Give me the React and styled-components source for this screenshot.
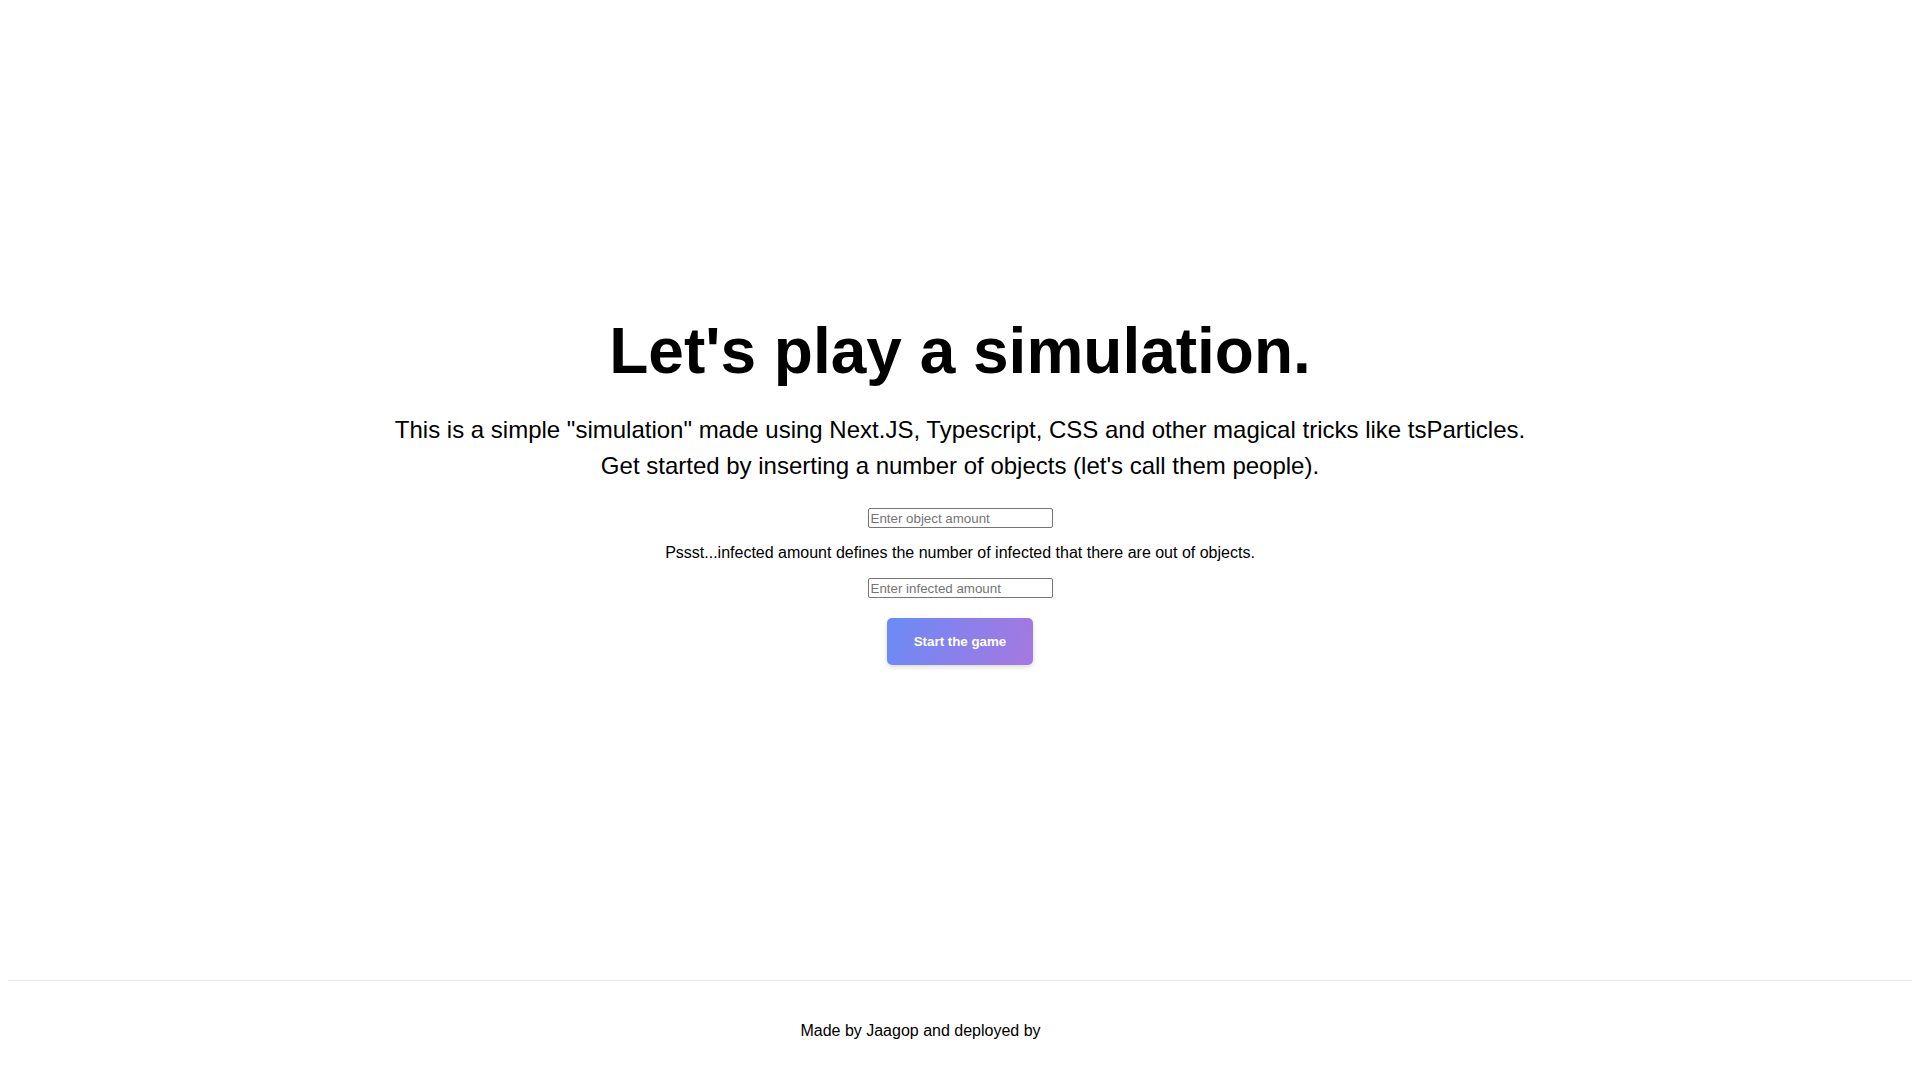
import React from 'react';
import styled, { createGlobalStyle } from 'styled-components';

const GlobalStyle = createGlobalStyle`
  html,
  body {
    padding: 0;
    margin: 0;
    font-family: "Liberation Sans", Arial, sans-serif;
    color: #000;
    background: #fff;
  }

  * {
    box-sizing: border-box;
  }
`;

const App = () => {
  return (
    <>
      <GlobalStyle />
      <Container>
        <Main>
          <Title>Let's play a simulation.</Title>

          <Description>
            This is a simple "simulation" made using Next.JS, Typescript, CSS and other magical tricks like tsParticles.
            <br />
            Get started by inserting a number of objects (let's call them people).
          </Description>

          <AmountInput type="number" placeholder="Enter object amount" />
          <Hint>Pssst...infected amount defines the number of infected that there are out of objects.</Hint>
          <AmountInput type="number" placeholder="Enter infected amount" />

          <StartButton type="button">Start the game</StartButton>
        </Main>

        <Footer>
          <FooterLink href="#">
            Made by Jaagop and deployed by
            <Logo aria-hidden="true" />
          </FooterLink>
        </Footer>
      </Container>
    </>
  );
};

export default App;

const Container = styled.div`
  min-height: 100vh;
  padding: 0 0.5rem;
  display: flex;
  flex-direction: column;
  justify-content: center;
  align-items: center;
`;

const Main = styled.main`
  padding: 5rem 0;
  flex: 1;
  display: flex;
  flex-direction: column;
  justify-content: center;
  align-items: center;
`;

const Title = styled.h1`
  margin: 0;
  line-height: 1.15;
  font-size: 4rem;
  font-weight: 700;
  text-align: center;
`;

const Description = styled.p`
  margin: 1em 0;
  line-height: 1.5;
  font-size: 1.5rem;
  text-align: center;
`;

const Hint = styled.p`
  margin: 1em 0;
  font-size: 1rem;
  text-align: center;
`;

const AmountInput = styled.input`
  display: block;
  width: 185px;
  height: 20px;
  padding: 1px 2px;
  font-family: "Liberation Sans", Arial, sans-serif;
  font-size: 13.33px;
  border: 1px solid #767676;
  border-radius: 2px;
  background: #fff;
  color: #000;
  appearance: textfield;

  &::placeholder {
    color: #757575;
  }

  &::-webkit-outer-spin-button,
  &::-webkit-inner-spin-button {
    -webkit-appearance: none;
    margin: 0;
  }
`;

const StartButton = styled.button`
  margin-top: 20px;
  padding: 16px 27px;
  border: none;
  border-radius: 5px;
  background: linear-gradient(110deg, #6a8cf7 0%, #8a80ea 50%, #a678e0 100%);
  box-shadow: 0 2px 5px rgba(0, 0, 0, 0.15);
  color: #fff;
  font-family: "Liberation Sans", Arial, sans-serif;
  font-size: 13.33px;
  font-weight: 700;
  line-height: 15px;
  cursor: pointer;
`;

const Footer = styled.footer`
  width: 100%;
  height: 100px;
  border-top: 1px solid #eaeaea;
  display: flex;
  justify-content: center;
  align-items: center;
`;

const FooterLink = styled.a`
  display: flex;
  justify-content: center;
  align-items: center;
  color: inherit;
  text-decoration: none;
  font-size: 1rem;
`;

const Logo = styled.span`
  display: inline-block;
  width: 71px;
  height: 1em;
  margin-left: 0.5rem;
`;
